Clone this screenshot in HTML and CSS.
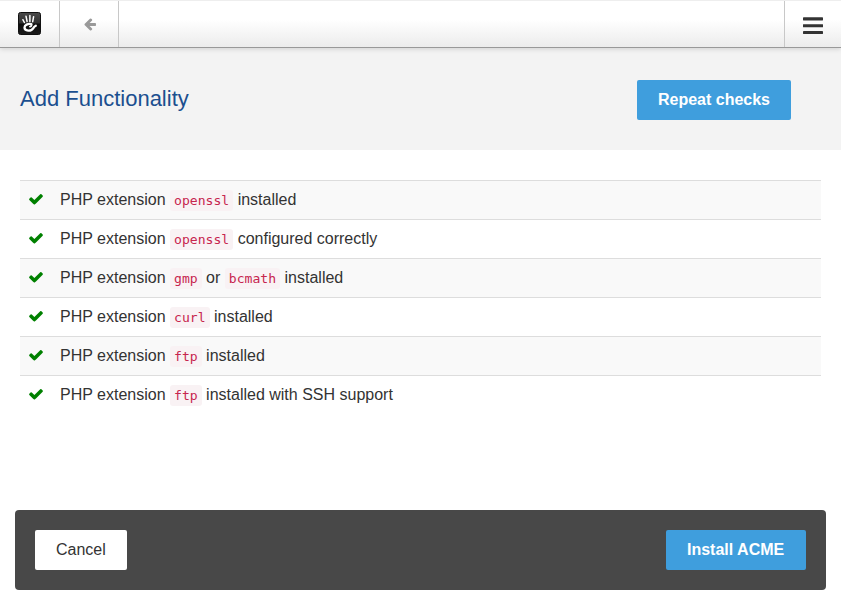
FILE: index.html
```html
<!DOCTYPE html>
<html lang="en">
<head>
<meta charset="utf-8">
<title>Add Functionality</title>
<link rel="stylesheet" href="styles.css">
</head>
<body>
<svg class="sprite" width="0" height="0" aria-hidden="true">
  <symbol id="check" viewBox="0 0 1792 1792"><path d="M1671 566q0 40-28 68l-724 724-136 136q-28 28-68 28t-68-28l-136-136-362-362q-28-28-28-68t28-68l136-136q28-28 68-28t68 28l294 295 656-657q28-28 68-28t68 28l136 136q28 28 28 68z"/></symbol>
</svg>
<nav class="toolbar">
  <a class="tool logo">
    <svg width="23" height="23" viewBox="0 0 23 23">
      <defs><linearGradient id="tile" x1="0" y1="0" x2="0" y2="1"><stop offset="0" stop-color="#4a4a4a"/><stop offset=".48" stop-color="#303030"/><stop offset=".52" stop-color="#0c0c0c"/><stop offset="1" stop-color="#1c1c1c"/></linearGradient></defs>
      <rect x=".5" y=".5" width="22" height="22" rx="2" fill="url(#tile)" stroke="#111"/>
      <g fill="none" stroke="#fff" stroke-linecap="round">
        <path stroke-width="1.5" d="M4.900 7.700l1.500 2.800M8 4.200l1.100 5.300M11.900 3.500v5.900M15.600 4.700l-.9 5"/>
        <path stroke-width="2.300" d="M13.300 12.100C9.800 11.500 6.500 13 6.500 15.500c0 3.700 6.700 4.300 8.800.6.700-1.300 1.600-1.900 2.500-2.300"/>
        <path stroke-width="1.800" d="M13.500 12.300c.4 1.300-.4 2-1.600 2.300"/>
      </g>
    </svg>
  </a>
  <a class="tool back">
    <svg width="14" height="14" viewBox="0 0 1792 1792"><path fill="#999" d="M1664 896v128q0 53-32.500 90.500t-84.500 37.500h-704l293 294q38 36 38 90t-38 90l-75 76q-37 37-90 37-52 0-91-37l-651-652q-37-37-37-90 0-52 37-91l651-650q38-38 91-38 52 0 90 38l75 74q38 38 38 91t-38 91l-293 293h704q52 0 84.500 37.500t32.500 90.500z"/></svg>
  </a>
  <a class="tool menu">
    <svg width="20" height="18" viewBox="0 0 20 18" fill="#333"><rect y=".3" width="20" height="3.200" rx=".4"/><rect y="7.200" width="20" height="3.100" rx=".4"/><rect y="14" width="20" height="3" rx=".4"/></svg>
  </a>
</nav>
<header class="heading">
  <h1>Add Functionality</h1>
  <a class="btn primary">Repeat checks</a>
</header>
<main>
  <ul class="checks">
    <li><svg class="check"><use href="#check"/></svg><span>PHP extension <code>openssl</code> installed</span></li>
    <li><svg class="check"><use href="#check"/></svg><span>PHP extension <code>openssl</code> configured correctly</span></li>
    <li><svg class="check"><use href="#check"/></svg><span>PHP extension <code>gmp</code> or <code>bcmath</code> installed</span></li>
    <li><svg class="check"><use href="#check"/></svg><span>PHP extension <code>curl</code> installed</span></li>
    <li><svg class="check"><use href="#check"/></svg><span>PHP extension <code>ftp</code> installed</span></li>
    <li><svg class="check"><use href="#check"/></svg><span>PHP extension <code>ftp</code> installed with SSH support</span></li>
  </ul>
</main>
<footer class="actions">
  <a class="btn">Cancel</a>
  <a class="btn primary install">Install ACME</a>
</footer>
</body>
</html>
```
FILE: styles.css
```css
* { box-sizing: border-box; }
body {
  margin: 0;
  height: 605px;
  display: flex;
  flex-direction: column;
  background: #fff;
  color: #333;
  font: 16px/22px "Liberation Sans", Arial, sans-serif;
}
.sprite { display: none; }
.toolbar {
  display: flex;
  flex: none;
  height: 48px;
  border-top: 1px solid #eee;
  border-bottom: 1px solid #999;
  background: linear-gradient(#fff 40%, #ececec);
  box-shadow: 0 1px 5px rgba(0, 0, 0, .15);
  position: relative;
}
.tool {
  display: flex;
  align-items: center;
  justify-content: center;
  border-right: 1px solid #c8c8c8;
}
.logo { width: 60px; padding-bottom: 1px; }
.back { width: 59px; padding-left: 2px; }
.menu {
  width: 57px;
  margin-left: auto;
  padding-top: 4px;
  border-right: 0;
  border-left: 1px solid #c8c8c8;
}
.heading {
  display: flex;
  flex: none;
  justify-content: space-between;
  height: 102px;
  padding: 32px 50px 0 20px;
  background: #f3f3f3;
}
h1 {
  margin: 4px 0 0;
  color: #1b4f8f;
  font-size: 22px;
  font-weight: 400;
  line-height: 30px;
}
.btn {
  height: 40px;
  padding: 0 21px;
  border-radius: 2px;
  background: #fff;
  line-height: 39px;
}
.primary { background: #3f9edd; color: #fff; font-weight: 700; }
.install { width: 140px; white-space: nowrap; }
main { padding: 30px 20px 0; }
.checks { margin: 0; padding: 0; list-style: none; }
.checks li {
  display: flex;
  align-items: center;
  height: 39px;
  padding: 0 8px;
  border-top: 1px solid #ddd;
}
.checks li:nth-child(odd) { background: #f9f9f9; }
.check { width: 16px; height: 16px; margin: 0 16px 2px 0; fill: #008000; }
code {
  padding: 3px 4px;
  border-radius: 3px;
  background: #f9f2f4;
  color: #c7254e;
  font: 13.1px "DejaVu Sans Mono", monospace;
}
.actions {
  display: flex;
  justify-content: space-between;
  height: 80px;
  margin: auto 15px 15px;
  padding: 20px;
  border-radius: 4px;
  background: #484848;
}
```
